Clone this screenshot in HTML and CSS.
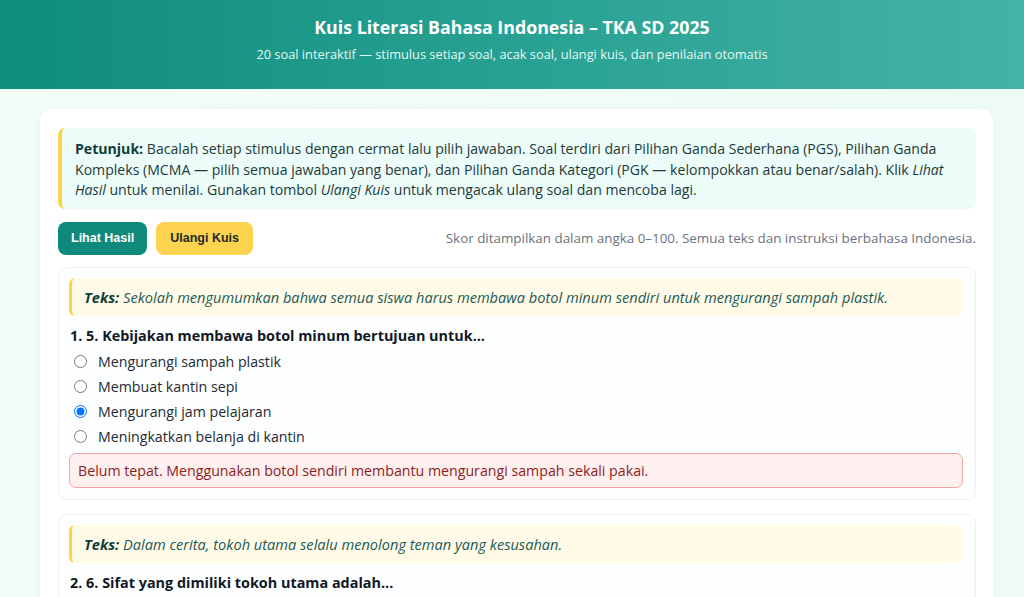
FILE: index.html
```html
<!DOCTYPE html>
<html lang="id">
<head>
<meta charset="utf-8">
<title>Kuis Literasi Bahasa Indonesia – TKA SD 2025</title>
<link rel="stylesheet" href="styles.css">
</head>
<body>
<header class="hero">
  <h1 class="hero-title">Kuis Literasi Bahasa Indonesia – TKA SD 2025</h1>
  <p class="hero-sub">20 soal interaktif — stimulus setiap soal, acak soal, ulangi kuis, dan penilaian otomatis</p>
</header>
<main class="page">
  <section class="panel">
    <div class="info">
      <b>Petunjuk:</b> Bacalah setiap stimulus dengan cermat lalu pilih jawaban. Soal terdiri dari Pilihan Ganda Sederhana (PGS), Pilihan Ganda Kompleks (MCMA — pilih semua jawaban yang benar), dan Pilihan Ganda Kategori (PGK — kelompokkan atau benar/salah). Klik <i>Lihat Hasil</i> untuk menilai. Gunakan tombol <i>Ulangi Kuis</i> untuk mengacak ulang soal dan mencoba lagi.
    </div>
    <div class="toolbar">
      <button class="btn btn-primary" type="button">Lihat Hasil</button>
      <button class="btn btn-warn" type="button">Ulangi Kuis</button>
      <span class="note">Skor ditampilkan dalam angka 0–100. Semua teks dan instruksi berbahasa Indonesia.</span>
    </div>

    <article class="q">
      <div class="stim"><b>Teks:</b> Sekolah mengumumkan bahwa semua siswa harus membawa botol minum sendiri untuk mengurangi sampah plastik.</div>
      <h2 class="q-title">1. 5. Kebijakan membawa botol minum bertujuan untuk...</h2>
      <label class="opt"><input type="radio" name="q1"> Mengurangi sampah plastik</label>
      <label class="opt"><input type="radio" name="q1"> Membuat kantin sepi</label>
      <label class="opt"><input type="radio" name="q1" checked> Mengurangi jam pelajaran</label>
      <label class="opt"><input type="radio" name="q1"> Meningkatkan belanja di kantin</label>
      <div class="fb">Belum tepat. Menggunakan botol sendiri membantu mengurangi sampah sekali pakai.</div>
    </article>

    <article class="q">
      <div class="stim"><b>Teks:</b> Dalam cerita, tokoh utama selalu menolong teman yang kesusahan.</div>
      <h2 class="q-title">2. 6. Sifat yang dimiliki tokoh utama adalah...</h2>
      <label class="opt"><input type="radio" name="q2"> Penolong</label>
      <label class="opt"><input type="radio" name="q2"> Pemalas</label>
      <label class="opt"><input type="radio" name="q2"> Sombong</label>
      <label class="opt"><input type="radio" name="q2"> Pemarah</label>
    </article>
  </section>
</main>
</body>
</html>
```
FILE: styles.css
```css
* { box-sizing: border-box; }
html, body { margin: 0; padding: 0; }
body {
  font-family: "Open Sans", "Noto Sans", sans-serif;
  background: linear-gradient(90deg, #f3fdf8, #eefbf4);
  color: #1f2937;
}
.hero {
  background: linear-gradient(90deg, #0e8c7c 0%, #2aa394 55%, #45b2a6 100%);
  color: #fff;
  text-align: center;
  padding: 14px 16px 0;
  height: 89px;
}
.hero-title {
  margin: 0;
  font-size: 17.8px;
  font-weight: 700;
  line-height: 26px;
}
.hero-sub {
  margin: 5px 0 0;
  font-size: 12.8px;
  line-height: 18px;
  color: #e6f7f3;
}
.page {
  padding: 20px 31px 0 40px;
}
.panel {
  background: #fff;
  border-radius: 12px;
  padding: 19px 17px 20px 18px;
  box-shadow: 0 2px 10px rgba(16, 120, 100, 0.06);
}
.info {
  background: #ecfdf9;
  border-left: 4px solid #fcd34d;
  border-radius: 7px;
  padding: 11px 14px 8px 13px;
  font-size: 14.1px;
  line-height: 20.5px;
  color: #1e3a3a;
}
.info b { color: #0f3d37; }
.toolbar {
  display: flex;
  align-items: center;
  gap: 9px;
  margin: 13px 0 12px;
}
.btn {
  font-family: "Liberation Sans", Arial, sans-serif;
  font-weight: 700;
  font-size: 12.5px;
  border: 0;
  border-radius: 8px;
  height: 33px;
  padding: 0 13px;
  cursor: pointer;
}
.btn-primary { background: #0f8a7a; color: #fff; }
.btn-warn { background: #fdd34f; color: #1f2a2a; padding: 0 14px; }
.note {
  margin-left: auto;
  font-size: 13.4px;
  color: #6b7280;
}
.q {
  border: 1px solid #edf2f0;
  background: #fcfffd;
  border-radius: 9px;
  padding: 10px 12px 11px 10px;
  margin-bottom: 14px;
}
.stim {
  background: #fffbe8;
  border-left: 3px solid #fcd34d;
  border-radius: 6px;
  padding: 9px 12px 9px 12px;
  font-style: italic;
  font-size: 14.6px;
  line-height: 20px;
  color: #1d5a55;
}
.stim b { color: #0f3d37; }
.q-title {
  margin: 9px 0 2px 1px;
  font-size: 14.4px;
  font-weight: 700;
  line-height: 22px;
  color: #111827;
}
.opt {
  display: flex;
  align-items: center;
  height: 25px;
  font-size: 14.2px;
  color: #1f2937;
  padding-left: 5px;
}
.opt input { margin: 0 11px 0 0; width: 13px; height: 13px; }
.fb {
  margin-top: 4px;
  background: #fff0f0;
  border: 1px solid #f5a3a3;
  border-radius: 7px;
  padding: 7px 8px;
  font-size: 14.2px;
  line-height: 19px;
  color: #8b1d1d;
}
```
